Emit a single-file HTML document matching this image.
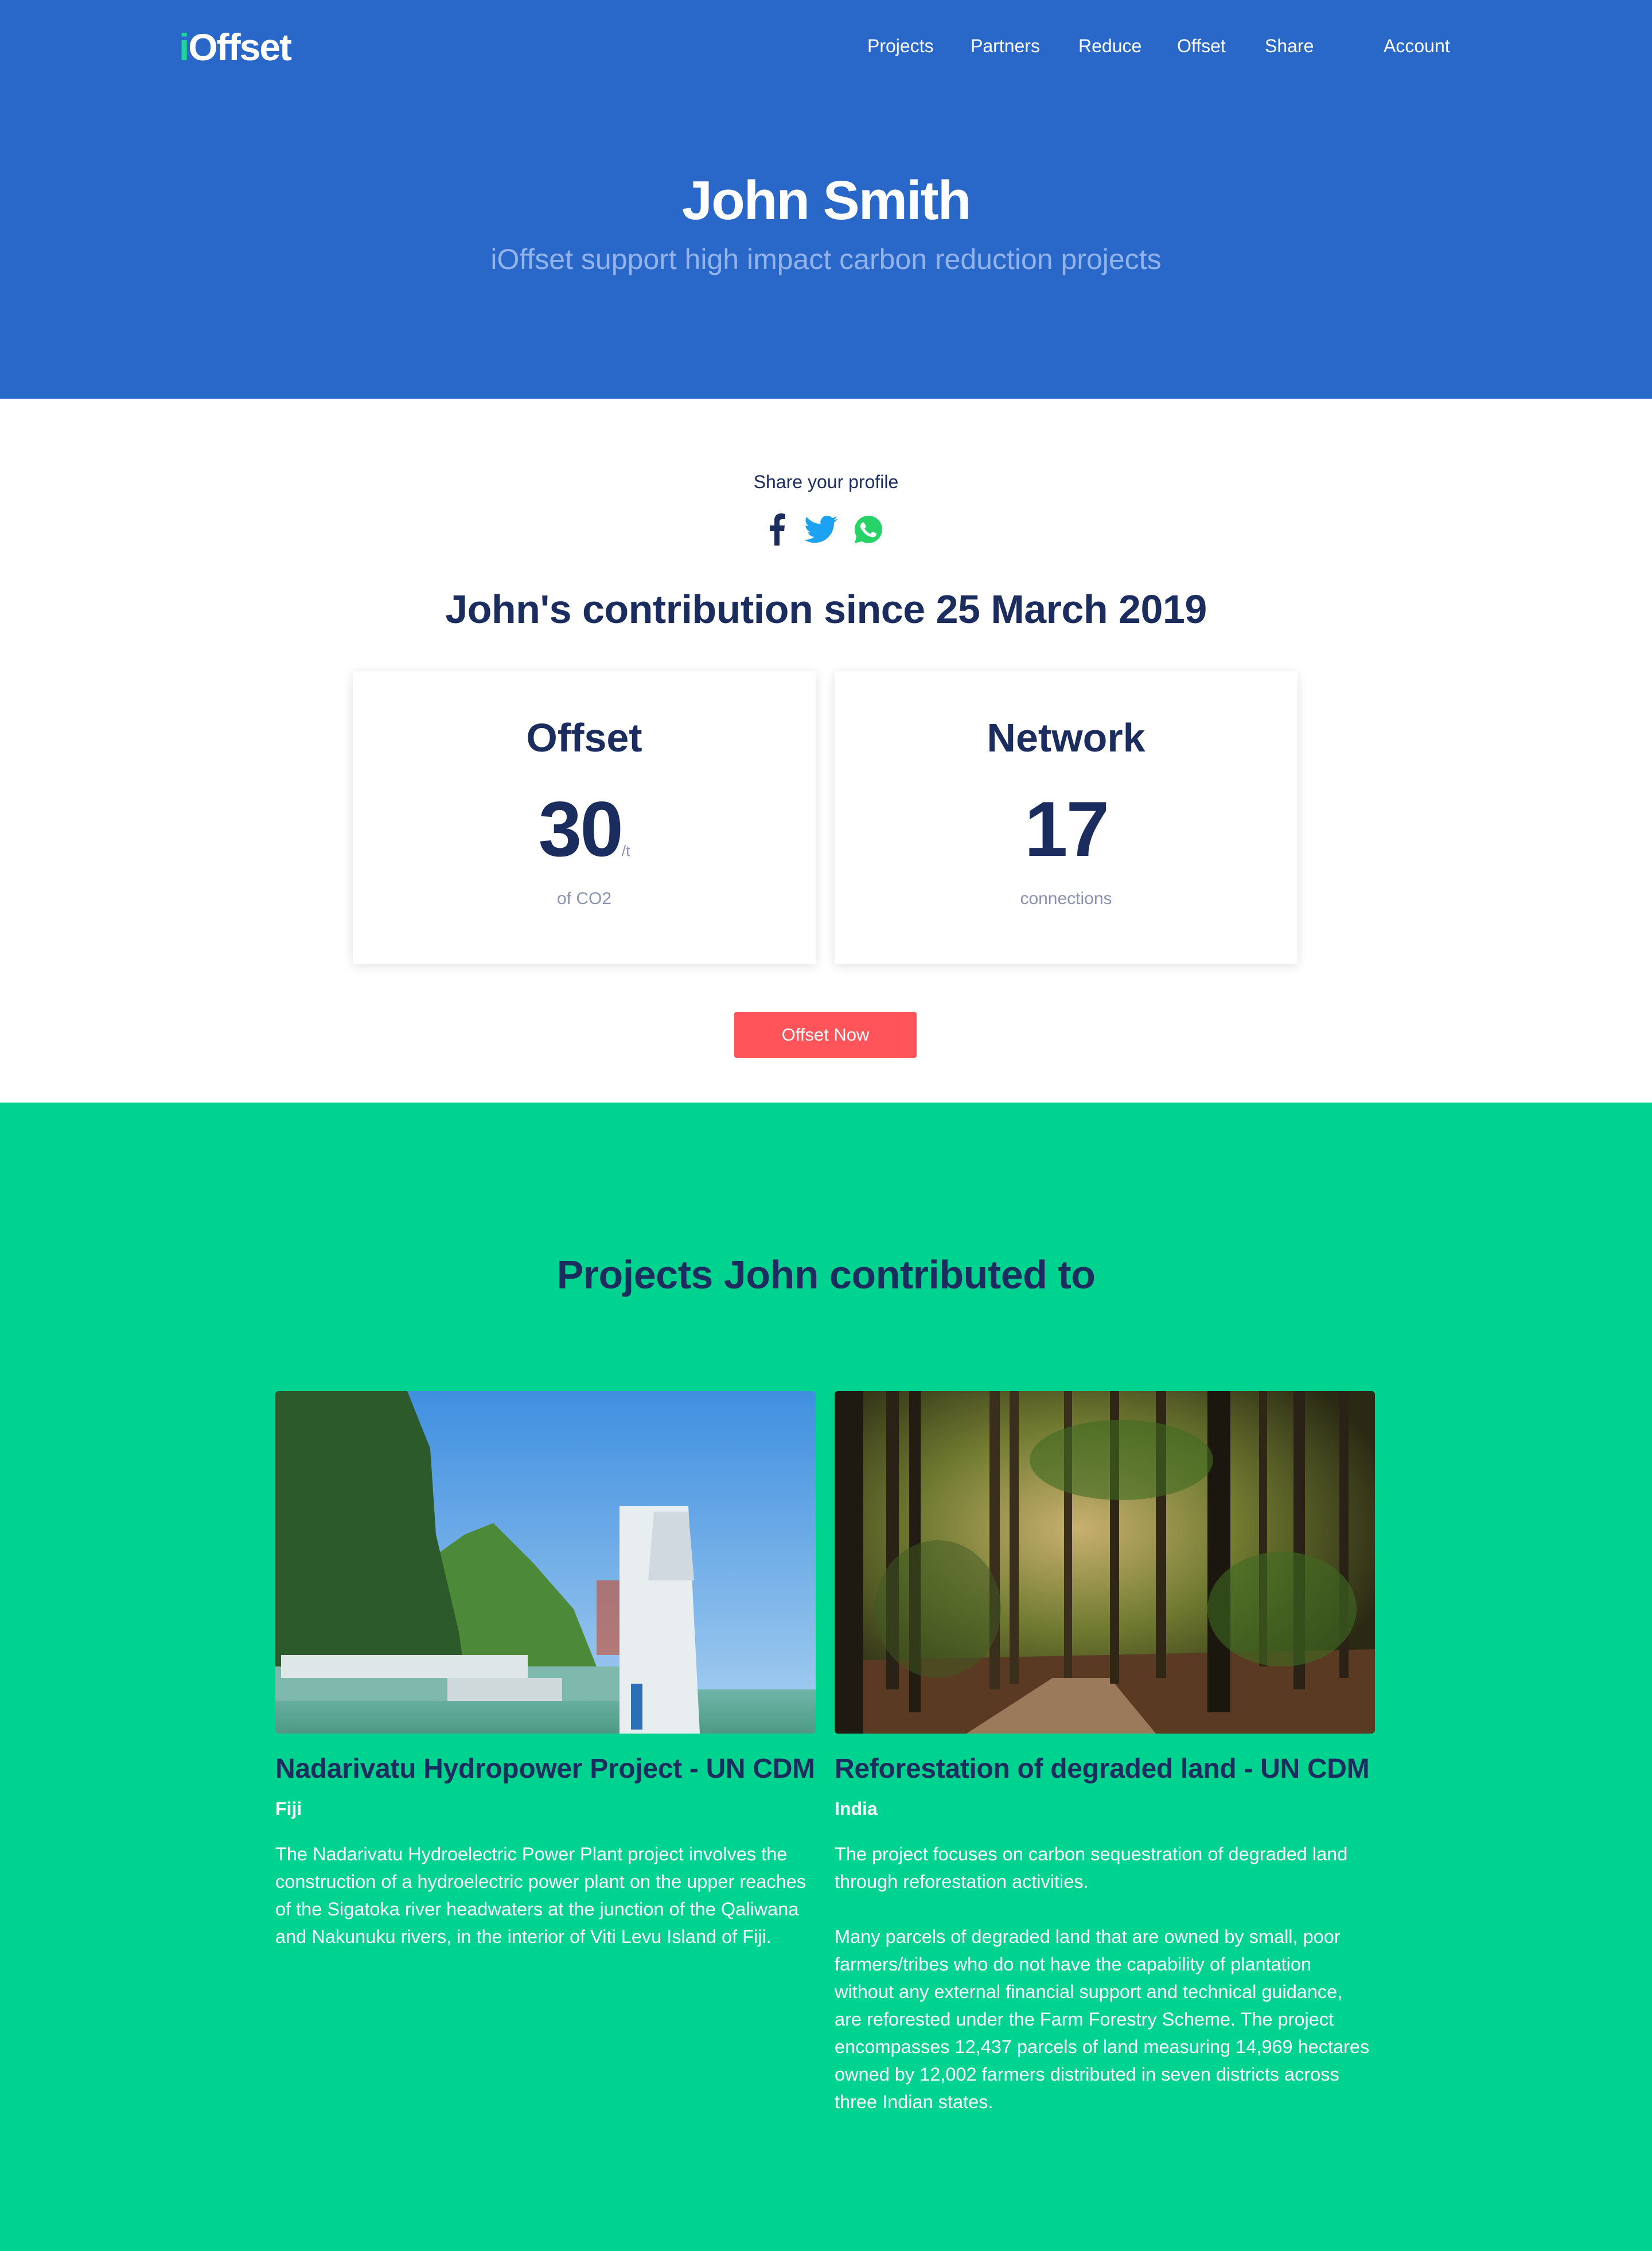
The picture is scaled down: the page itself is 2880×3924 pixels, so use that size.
<!DOCTYPE html>
<html><head><meta charset="utf-8">
<style>
*{margin:0;padding:0;box-sizing:border-box}
body{width:2880px;height:3924px;position:relative;font-family:"Liberation Sans",sans-serif;background:#fff;overflow:hidden}
.a{position:absolute;white-space:nowrap}
.c{left:0;width:2880px;text-align:center}
.nav{top:60px;font-size:32px;color:#fff;line-height:40px}
.navy{color:#1b2c5e}
.card{position:absolute;top:1170px;width:807px;height:510px;background:#fff;box-shadow:0 4px 18px rgba(0,0,0,.12)}
.card .t{position:absolute;left:0;width:100%;text-align:center;color:#1b2c5e}
p.par{font-size:32.5px;line-height:48px;color:#fff}
</style></head><body>
<div class="a" style="left:0;top:0;width:2880px;height:695px;background:#2968c8"></div>
<div class="a" style="left:312px;top:44px;font-size:66px;font-weight:bold;color:#fff;letter-spacing:-2px;line-height:76px"><span style="color:#1fd59a">i</span>Offset</div>
<div class="a nav" style="left:1512px">Projects</div>
<div class="a nav" style="left:1692px">Partners</div>
<div class="a nav" style="left:1880px">Reduce</div>
<div class="a nav" style="left:2052px">Offset</div>
<div class="a nav" style="left:2205px">Share</div>
<div class="a nav" style="left:2412px">Account</div>
<div class="a c" style="top:290px;font-size:96px;font-weight:bold;color:#fff;line-height:120px;letter-spacing:-2px">John Smith</div>
<div class="a c" style="top:422px;font-size:50px;color:#93b4ea;line-height:60px">iOffset support high impact carbon reduction projects</div>

<div class="a c navy" style="top:820px;font-size:32px;line-height:40px">Share your profile</div>
<svg class="a" style="left:1340px;top:895px" width="30" height="56" viewBox="0 0 30 56"><path d="M19 56V31h8l1-10h-9v-6c0-3 1-5 5-5h5V1c-1 0-4-1-7-1-7 0-12 4-12 12v9H2v10h8v25z" fill="#1b2c5e"/></svg>
<svg class="a" style="left:1402px;top:898px" width="58" height="50" viewBox="0 0 24 20"><path d="M24 2.4c-.9.4-1.8.6-2.8.8 1-.6 1.8-1.6 2.2-2.7-1 .6-2 1-3.1 1.2C19.3.7 18 0 16.6 0c-2.7 0-4.9 2.2-4.9 4.9 0 .4 0 .8.1 1.1C7.7 5.8 4.1 3.9 1.7.9c-.4.7-.7 1.6-.7 2.5 0 1.7.9 3.2 2.2 4.1-.8 0-1.600-.2-2.2-.6v.1c0 2.4 1.7 4.4 3.9 4.8-.4.1-.8.2-1.3.2-.3 0-.6 0-.9-.1.6 2 2.4 3.4 4.6 3.4-1.7 1.3-3.8 2.1-6.1 2.1H0c2.2 1.4 4.8 2.2 7.5 2.2 9.1 0 14-7.5 14-14v-.6c1-.7 1.8-1.6 2.5-2.5z" fill="#1da1f2"/></svg>
<svg class="a" style="left:1490px;top:898px" width="48" height="50" viewBox="0 0 24 24"><path d="M12 0C5.4 0 0 5.4 0 12c0 2.1.6 4.2 1.6 6L0 24l6.2-1.6c1.8 1 3.7 1.5 5.8 1.5 6.6 0 12-5.4 12-12S18.6 0 12 0z" fill="#25d366"/><path d="M8.5 6.5c-.3-.6-.5-.6-.8-.6h-.6c-.2 0-.6.1-.9.4-.3.3-1.2 1.1-1.2 2.8s1.2 3.3 1.4 3.5c.2.2 2.4 3.8 5.900 5.2 2.9 1.1 3.5.9 4.1.9.6-.1 2-.8 2.3-1.6.3-.8.3-1.5.2-1.6-.1-.1-.3-.2-.7-.4l-2.3-1.1c-.3-.1-.5-.2-.8.2l-1 1.3c-.2.2-.4.3-.7.1-.4-.2-1.5-.6-2.8-1.8-1-.9-1.7-2-1.9-2.4-.2-.3 0-.5.2-.7l.5-.6c.2-.2.2-.4.4-.6.1-.2 0-.4 0-.6z" fill="#fff"/></svg>
<div class="a c navy" style="top:1020px;font-size:70px;font-weight:bold;line-height:84px;letter-spacing:-0.5px">John's contribution since 25 March 2019</div>

<div class="card" style="left:615px">
<div class="t" style="top:76px;font-size:70px;font-weight:bold;line-height:80px">Offset</div>
<div class="t" style="top:200px;font-size:136px;font-weight:bold;line-height:150px;letter-spacing:-3px">30<span style="font-size:26px;font-weight:normal;color:#8a93b0;letter-spacing:0">/t</span></div>
<div class="t" style="top:378px;font-size:30px;color:#8a93b0;line-height:38px">of CO2</div>
</div>
<div class="card" style="left:1455px">
<div class="t" style="top:76px;font-size:70px;font-weight:bold;line-height:80px">Network</div>
<div class="t" style="top:200px;font-size:136px;font-weight:bold;line-height:150px;letter-spacing:-3px">17</div>
<div class="t" style="top:378px;font-size:30px;color:#8a93b0;line-height:38px">connections</div>
</div>
<div class="a" style="left:1280px;top:1764px;width:318px;height:80px;background:#ff545a;border-radius:4px;color:#fff;font-size:31px;line-height:80px;text-align:center">Offset Now</div>

<div class="a" style="left:0;top:1922px;width:2880px;height:2002px;background:#00d38f"></div>
<div class="a c navy" style="top:2180px;font-size:70px;font-weight:bold;line-height:84px;letter-spacing:-0.5px">Projects John contributed to</div>

<svg class="a" style="left:480px;top:2425px;border-radius:6px" width="942" height="597" viewBox="0 0 942 597">
<defs><linearGradient id="sky" x1="0" y1="0" x2="0" y2="1"><stop offset="0" stop-color="#3f8fe0"/><stop offset="1" stop-color="#a9d0f0"/></linearGradient>
<linearGradient id="wat" x1="0" y1="0" x2="0" y2="1"><stop offset="0" stop-color="#6fb5a8"/><stop offset="1" stop-color="#4e9a86"/></linearGradient></defs>
<rect width="942" height="597" fill="url(#sky)"/>
<path d="M260 300 L330 250 L380 230 L450 300 L520 380 L560 480 L560 520 L260 520z" fill="#4c8a3a"/>
<path d="M0 0 L230 0 L270 100 L280 250 L320 420 L340 560 L0 560z" fill="#2d5a2a"/>
<rect x="0" y="520" width="942" height="77" fill="url(#wat)"/>
<rect x="0" y="480" width="600" height="60" fill="#7fb8ad"/>
<path d="M10 460 L440 460 L440 500 L10 500z" fill="#dfe6e8"/>
<path d="M300 500 L500 500 L500 540 L300 540z" fill="#cfd8da"/>
<path d="M600 200 L720 200 L740 597 L600 597z" fill="#e8edf0"/>
<path d="M660 210 L720 210 L730 330 L650 330z" fill="#d0d8e0"/>
<rect x="620" y="510" width="20" height="80" fill="#2a6fb8"/>
<path d="M560 330 L600 330 L600 460 L560 460z" fill="#c84a2a" opacity=".6"/>
</svg>

<svg class="a" style="left:1455px;top:2425px;border-radius:6px" width="942" height="597" viewBox="0 0 942 597">
<defs><radialGradient id="fl" cx="0.45" cy="0.4" r="0.6"><stop offset="0" stop-color="#c9b070"/><stop offset=".5" stop-color="#6f7a30"/><stop offset="1" stop-color="#2a2a14"/></radialGradient></defs>
<rect width="942" height="597" fill="url(#fl)"/>
<path d="M0 470 L942 450 L942 597 L0 597z" fill="#5a3a22"/>
<path d="M230 597 L380 500 L480 500 L560 597z" fill="#9a7a5a"/>
<rect x="0" y="0" width="50" height="597" fill="#1e1a12"/>
<rect x="90" y="0" width="22" height="520" fill="#2a2216"/>
<rect x="130" y="0" width="20" height="560" fill="#231c12"/>
<rect x="270" y="0" width="18" height="520" fill="#3a2e1c"/>
<rect x="305" y="0" width="16" height="510" fill="#3a2e1c"/>
<rect x="400" y="0" width="14" height="500" fill="#3a2e1c"/>
<rect x="480" y="0" width="16" height="510" fill="#2f2616"/>
<rect x="560" y="0" width="18" height="500" fill="#2f2616"/>
<rect x="650" y="0" width="40" height="560" fill="#1c170e"/>
<rect x="740" y="0" width="14" height="480" fill="#2f2616"/>
<rect x="800" y="0" width="20" height="520" fill="#2a2216"/>
<rect x="880" y="0" width="16" height="500" fill="#2a2216"/>
<ellipse cx="500" cy="120" rx="160" ry="70" fill="#3f6a22" opacity=".6"/>
<ellipse cx="780" cy="380" rx="130" ry="100" fill="#3f6a22" opacity=".6"/>
<ellipse cx="180" cy="380" rx="110" ry="120" fill="#3f5a22" opacity=".5"/>
</svg>

<div class="a navy" style="left:480px;top:3056px;font-size:48px;font-weight:bold;line-height:56px;letter-spacing:-0.3px">Nadarivatu Hydropower Project - UN CDM</div>
<div class="a" style="left:480px;top:3134px;font-size:32px;font-weight:bold;color:#fff;line-height:38px">Fiji</div>
<p class="a par" style="left:480px;top:3208px">The Nadarivatu Hydroelectric Power Plant project involves the<br>construction of a hydroelectric power plant on the upper reaches<br>of the Sigatoka river headwaters at the junction of the Qaliwana<br>and Nakunuku rivers, in the interior of Viti Levu Island of Fiji.</p>

<div class="a navy" style="left:1455px;top:3056px;font-size:48px;font-weight:bold;line-height:56px;letter-spacing:-0.3px">Reforestation of degraded land - UN CDM</div>
<div class="a" style="left:1455px;top:3134px;font-size:32px;font-weight:bold;color:#fff;line-height:38px">India</div>
<p class="a par" style="left:1455px;top:3208px">The project focuses on carbon sequestration of degraded land<br>through reforestation activities.<br><br>Many parcels of degraded land that are owned by small, poor<br>farmers/tribes who do not have the capability of plantation<br>without any external financial support and technical guidance,<br>are reforested under the Farm Forestry Scheme. The project<br>encompasses 12,437 parcels of land measuring 14,969 hectares<br>owned by 12,002 farmers distributed in seven districts across<br>three Indian states.</p>
</body></html>
